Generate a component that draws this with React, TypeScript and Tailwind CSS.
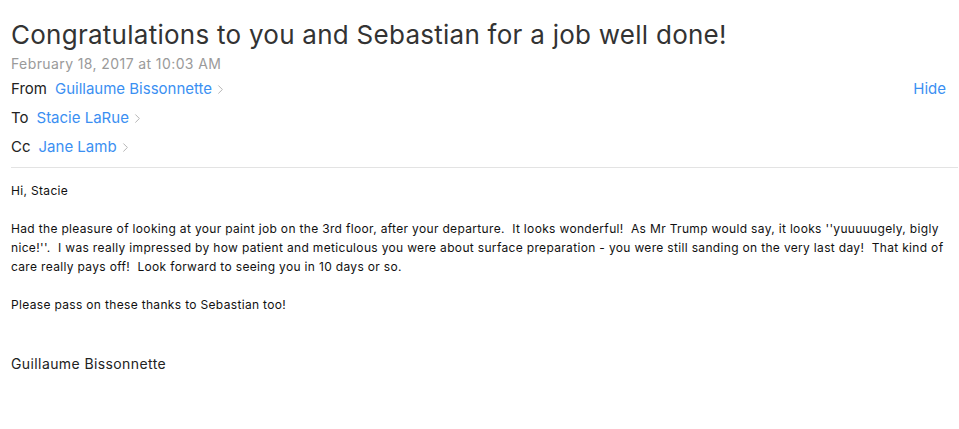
import { ChevronRight } from "lucide-react";

function Recipient({ label, name }: { label: string; name: string }) {
  return (
    <div className="flex items-center h-[29px] text-[15px] text-[#222]">
      <span>{label}</span>
      <span className="ml-[8px] text-[#3b8ff2]">{name}</span>
      <ChevronRight className="w-[15px] h-[15px] text-[#b0b0b0] ml-[1px]" strokeWidth={1.5} />
    </div>
  );
}

export default function App() {
  return (
    <div className="bg-white w-[959px] h-[429px] overflow-hidden font-['Inter',sans-serif]">
      <div className="pl-[11px] pr-[1px] pt-[18px]">
        <h1 className="text-[26px] leading-[34px] text-[#333] tracking-[0.26px]">
          Congratulations to you and Sebastian for a job well done!
        </h1>
        <div className="text-[14px] leading-[20px] text-[#9a9a9a] mt-[2px] tracking-[0.4px]">
          February 18, 2017 at 10:03 AM
        </div>
        <div className="flex justify-between mt-[1px]">
          <div className="flex flex-col">
            <Recipient label="From" name="Guillaume Bissonnette" />
            <Recipient label="To" name="Stacie LaRue" />
            <Recipient label="Cc" name="Jane Lamb" />
          </div>
          <div className="h-[29px] flex items-center pr-[12px] text-[15px] text-[#3b8ff2]">Hide</div>
        </div>
        <div className="border-t border-[#e3e3e3] mt-[5px]" />
        <div className="text-[12px] leading-[19px] text-[#111] pt-[13px] whitespace-pre-wrap tracking-[0.33px]">
          <p>Hi, Stacie</p>
          <p className="mt-[19px]">
            Had the pleasure of looking at your paint job on the 3rd floor, after your departure.  It looks wonderful!  As Mr Trump would say, it looks ''yuuuuugely, bigly
            <br />
            nice!''.  I was really impressed by how patient and meticulous you were about surface preparation - you were still sanding on the very last day!  That kind of
            <br />
            care really pays off!  Look forward to seeing you in 10 days or so.
          </p>
          <p className="mt-[19px]">Please pass on these thanks to Sebastian too!</p>
          <p className="mt-[40px] text-[14px] leading-[20px] text-[#222] tracking-[0.4px]">Guillaume Bissonnette</p>
        </div>
      </div>
    </div>
  );
}
